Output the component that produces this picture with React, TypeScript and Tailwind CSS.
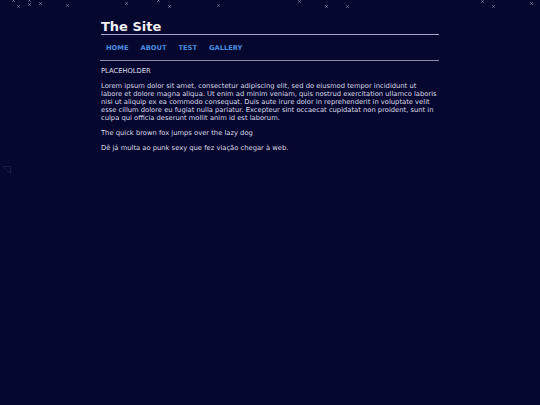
import React from 'react';

const stars: [number, number][] = [
  [13, 0], [18, 6], [29, 0], [29, 4], [40, 3], [67, 5], [126, 3], [158, 0], [169, 6],
  [218, 5], [299, 1], [326, 6], [347, 6], [482, 1], [493, 6], [531, 3],
];

const Star = ({ x, y }: { x: number; y: number }) => (
  <svg
    className="absolute"
    width="3"
    height="3"
    viewBox="0 0 3 3"
    style={{ left: x - 1.5, top: y - 1.5 }}
  >
    <path d="M0.3 0.3L2.7 2.7M2.7 0.3L0.3 2.7" stroke="#8c8cb4" strokeWidth="0.8" />
  </svg>
);

export default function App() {
  const links = ['Home', 'About', 'Test', 'Gallery'];

  return (
    <div
      className="relative w-[540px] h-[405px] overflow-hidden bg-[#05072e] text-[#dcdcea]"
      style={{ fontFamily: '"DejaVu Sans", Verdana, sans-serif' }}
    >
      {/* falling stars */}
      <div className="absolute inset-0 pointer-events-none">
        {stars.map(([x, y], i) => (
          <Star key={i} x={x} y={y} />
        ))}
        <svg className="absolute left-[2px] top-[165px] opacity-25" width="10" height="9" viewBox="0 0 10 9">
          <path d="M1 1.5H8.5V8.5L1 1.5" stroke="#5a5a90" strokeWidth="1" fill="none" />
        </svg>
      </div>

      <div className="relative mx-auto w-[338px] pt-[19px]">
        <header className="border-b border-[#a4a4cc]">
          <h1 className="text-[13px] leading-[15px] font-bold text-[#f0f0f6]">The Site</h1>
        </header>

        <nav className="-ml-[1px] flex border-b border-[#8a8aa8] pt-[10px] pb-[8px]">
          {links.map((l) => (
            <a
              key={l}
              className="px-[6px] text-[6.7px] leading-[7px] font-bold uppercase text-[#4a8ee0]"
            >
              {l}
            </a>
          ))}
        </nav>

        <main className="pt-[6px] text-[6.75px] leading-[8px]">
          <p className="mb-[7px]">PLACEHOLDER</p>
          <p className="mb-[7px]">
            Lorem ipsum dolor sit amet, consectetur adipiscing elit, sed do eiusmod tempor incididunt ut
            labore et dolore magna aliqua. Ut enim ad minim veniam, quis nostrud exercitation ullamco laboris
            nisi ut aliquip ex ea commodo consequat. Duis aute irure dolor in reprehenderit in voluptate velit
            esse cillum dolore eu fugiat nulla pariatur. Excepteur sint occaecat cupidatat non proident, sunt in
            culpa qui officia deserunt mollit anim id est laborum.
          </p>
          <p className="mb-[7px]">The quick brown fox jumps over the lazy dog</p>
          <p>Dê já multa ao punk sexy que fez viação chegar à web.</p>
        </main>
      </div>
    </div>
  );
}
